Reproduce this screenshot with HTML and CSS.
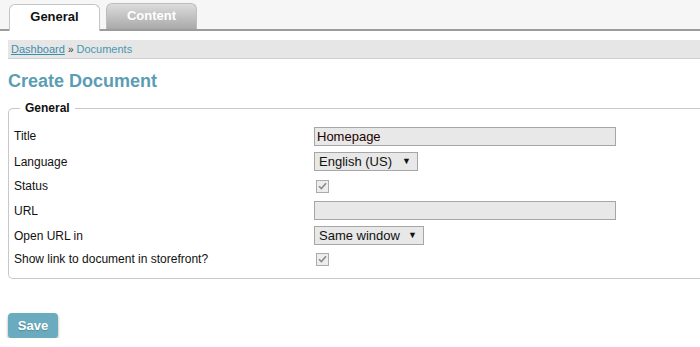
FILE: index.html
```html
<!DOCTYPE html>
<html lang="en">
<head>
    <meta charset="UTF-8">
    <title>Create Document</title>
    <link rel="stylesheet" href="styles.css">
</head>
<body>
    <div class="tabbar">
        <div class="tab active">General</div>
        <div class="tab">Content</div>
    </div>
    <div class="main">
        <div class="crumbs"><a href="#">Dashboard</a> <span class="raquo">&raquo;</span> Documents</div>
        <h1>Create Document</h1>
        <fieldset>
            <legend>General</legend>
            <div class="row r1">
                <label>Title</label>
                <input class="text" type="text" value="Homepage">
            </div>
            <div class="row r2">
                <label>Language</label>
                <div class="select sel-lang">English (US) <span class="arrow">&#9660;</span></div>
            </div>
            <div class="row r3">
                <label>Status</label>
                <span class="check"><svg width="9" height="8" viewBox="0 0 9 8"><path d="M1 4.2 L3.4 6.6 L8 1.2" fill="none" stroke="#8a8a8a" stroke-width="1.6"/></svg></span>
            </div>
            <div class="row r4">
                <label>URL</label>
                <input class="text" type="text" value="">
            </div>
            <div class="row r5">
                <label>Open URL in</label>
                <div class="select sel-win">Same window <span class="arrow">&#9660;</span></div>
            </div>
            <div class="row r6">
                <label>Show link to document in storefront?</label>
                <span class="check"><svg width="9" height="8" viewBox="0 0 9 8"><path d="M1 4.2 L3.4 6.6 L8 1.2" fill="none" stroke="#8a8a8a" stroke-width="1.6"/></svg></span>
            </div>
        </fieldset>
        <button class="save">Save</button>
    </div>
</body>
</html>
```

FILE: styles.css
```css
html, body { margin: 0; padding: 0; overflow: hidden; }
body { font-family: "Liberation Sans", Arial, sans-serif; font-size: 12px; color: #111; background: #fff; width: 700px; }

.tabbar { height: 29px; background: #f6f6f6; border-bottom: 2px solid #9c9c9c; display: flex; align-items: flex-end; padding-left: 9px; gap: 6px; }
.tab { width: 89px; height: 25px; box-sizing: content-box; border: 1px solid #bdbdbd; border-bottom: none; border-radius: 6px 6px 0 0; text-align: center; line-height: 24px; font-size: 13px; font-weight: bold; color: #fff; background: linear-gradient(#dcdcdc, #a9a9a9); }
.tab.active { background: #fff; color: #111; height: 26px; line-height: 24px; border-color: #c4c4c4; margin-bottom: -2px; }

.main { padding: 9px 0 0 8px; }

.crumbs { height: 18px; line-height: 19px; background: #e6e6e6; border-bottom: 1px solid #cfcfcf; padding-left: 3px; font-size: 11px; color: #4a97b1; }
.crumbs a { color: #3d8dab; text-decoration: underline; }
.raquo { color: #333; font-size: 10px; }

h1 { margin: 11px 0 9px 0; font-size: 18px; line-height: 22px; color: #5a9db5; }

fieldset { margin: 0; padding: 8px 0 8px 5px; border: 1px solid #c8c8c8; border-right: none; border-radius: 5px 0 0 5px; }
legend { font-weight: bold; font-size: 12px; padding: 0 5px; margin-left: 6px; }

.row { display: flex; align-items: center; }
.r1 { height: 26px; }
.r2 { height: 25px; }
.r3 { height: 24px; }
.r4 { height: 25px; }
.r5 { height: 25px; }
.r6 { height: 22px; }
.row label { width: 300px; flex-shrink: 0; }

.text { width: 302px; height: 19px; box-sizing: border-box; margin: 0; border: 1px solid #a6a6a6; background: #e8e8e8; font-family: inherit; font-size: 13px; color: #200; padding: 0 2px; outline: none; }

.select { height: 19px; box-sizing: border-box; border: 1px solid #a6a6a6; background: #e8e8e8; font-size: 13px; line-height: 17px; color: #111; padding-left: 4px; display: flex; white-space: nowrap; flex-shrink: 0; }
.sel-lang { width: 104px; }
.sel-win { width: 110px; }
.arrow { font-size: 9px; margin-left: auto; margin-right: 6px; }

.check { width: 13px; height: 13px; box-sizing: border-box; border: 1px solid #ababab; background: #ededed; margin-left: 2px; display: flex; align-items: center; justify-content: center; }

.save { margin-top: 34px; width: 50px; height: 25px; border: none; border-radius: 4px; background: #6aabbf; color: #fff; font-family: inherit; font-size: 13px; font-weight: bold; text-shadow: 0 1px 1px rgba(0,0,0,0.2); box-shadow: 0 2px 3px rgba(0,0,0,0.35); padding: 0; }
```
